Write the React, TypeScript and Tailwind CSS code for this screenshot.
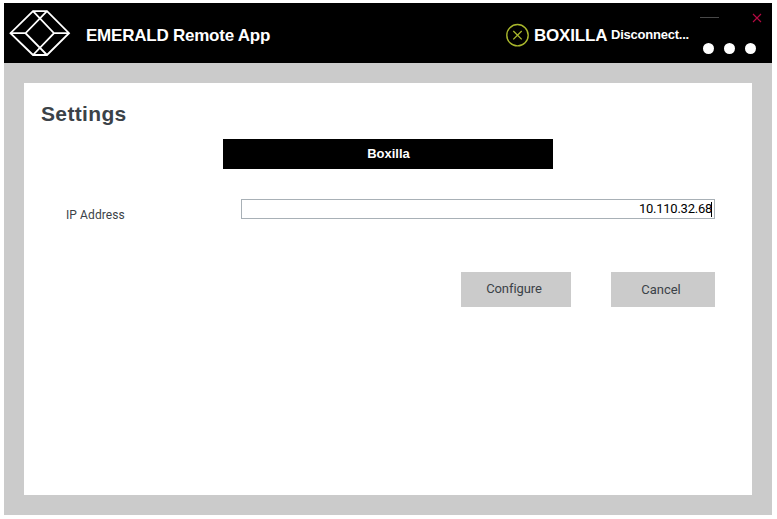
function CubeLogo() {
  return (
    <svg className="ml-[5px] mt-[6px] h-[48px] w-[62px] shrink-0" viewBox="9 9 62 48" fill="none" stroke="#fff" strokeWidth="1.8" strokeLinejoin="miter">
      <path d="M33 11.2H47L69 33.2L47 55H33L10.5 33.2Z" />
      <path d="M33 11.2L54 33.2L33 55M47 11.2L25.500 33.2L47 55M10.500 33.2H25.500M54 33.200H69" />
    </svg>
  );
}

function Header() {
  return (
    <header className="flex h-[60px] bg-black text-white">
      <CubeLogo />
      <h1 className="ml-[15px] mt-[21px] w-[400px] whitespace-nowrap text-[17px] font-bold leading-6 tracking-[-0.23px]">EMERALD Remote App</h1>
      <div className="ml-[19px] flex w-[188px] shrink-0">
        <svg className="mt-[20px] h-[24px] w-[24px] shrink-0" viewBox="0 0 24 24" fill="none" stroke="#a9b72c">
          <circle cx="12.500" cy="12.200" r="10.700" strokeWidth="1.400" />
          <path d="M8.300 8L16.700 16.400M16.700 8L8.300 16.400" strokeWidth="1.300" />
        </svg>
        <span className="ml-[5px] mt-[21px] w-[77px] whitespace-nowrap text-[17px] font-bold leading-6 tracking-[-0.2px]">BOXILLA</span>
        <span className="mt-[22px] whitespace-nowrap text-[13px] font-bold leading-5 tracking-[-0.23px]">Disconnect...</span>
      </div>
      <div className="ml-[6px] flex w-[70px] shrink-0 flex-col">
        <div className="mt-[10px] flex h-[12px] justify-between">
          <div className="ml-[1px] mt-[4px] h-px w-[19px] bg-[#484848]" />
          <svg className="mr-[7px] h-[10px] w-[10px]" viewBox="0 0 10 10" stroke="#b50a43" strokeWidth="1.100">
            <path d="M1 1L9 9M9 1L1 9" />
          </svg>
        </div>
        <div className="ml-[4px] mt-[18px] flex gap-[10px]">
          <i className="size-[11px] rounded-full bg-white" />
          <i className="size-[11px] rounded-full bg-white" />
          <i className="size-[11px] rounded-full bg-white" />
        </div>
      </div>
    </header>
  );
}

export default function App() {
  return (
    <div className="h-[519px] w-[777px] overflow-hidden bg-white pl-[4px] pt-[3px] font-['Liberation_Sans',Arial,sans-serif]">
      <div className="h-[512px] w-[768px] bg-[#cbcbcb]">
        <Header />
        <main className="mx-5 mt-5 h-[412px] bg-white text-[#3b4248]">
          <h2 className="pl-[17px] pt-[17px] text-[21px] font-bold leading-7 tracking-[0.35px]">Settings</h2>
          <div className="ml-[199px] mt-[11px] flex h-[30px] w-[330px] justify-center bg-black text-[13px] font-bold leading-[30px] text-white">
            <span className="pl-px">Boxilla</span>
          </div>
          <label className="mt-[30px] flex h-[33px]">
            <span className="ml-[42px] mt-[6px] w-[175px] font-['Roboto',sans-serif] text-[12px] leading-5 tracking-[0.1px]">IP Address</span>
            <span className="flex h-[20px] w-[474px] items-center justify-end border border-[#a8b0b6] pr-[2px] text-black">
              <span className="-mr-px font-['Roboto',sans-serif] text-[13px] leading-[18px] tracking-[-0.25px]">10.110.32.68</span>
              <span className="h-[15px] w-px bg-black" />
            </span>
          </label>
          <div className="ml-[437px] mt-[40px] flex gap-[40px] font-['Roboto',sans-serif] text-[13px]">
            <button className="h-[35px] w-[110px] bg-[#cbcbcb] pb-[2px] pr-[4px] text-[13px] tracking-[-0.07px]">Configure</button>
            <button className="h-[35px] w-[104px] bg-[#cbcbcb] pr-[4px] text-[13px]">Cancel</button>
          </div>
        </main>
      </div>
    </div>
  );
}
